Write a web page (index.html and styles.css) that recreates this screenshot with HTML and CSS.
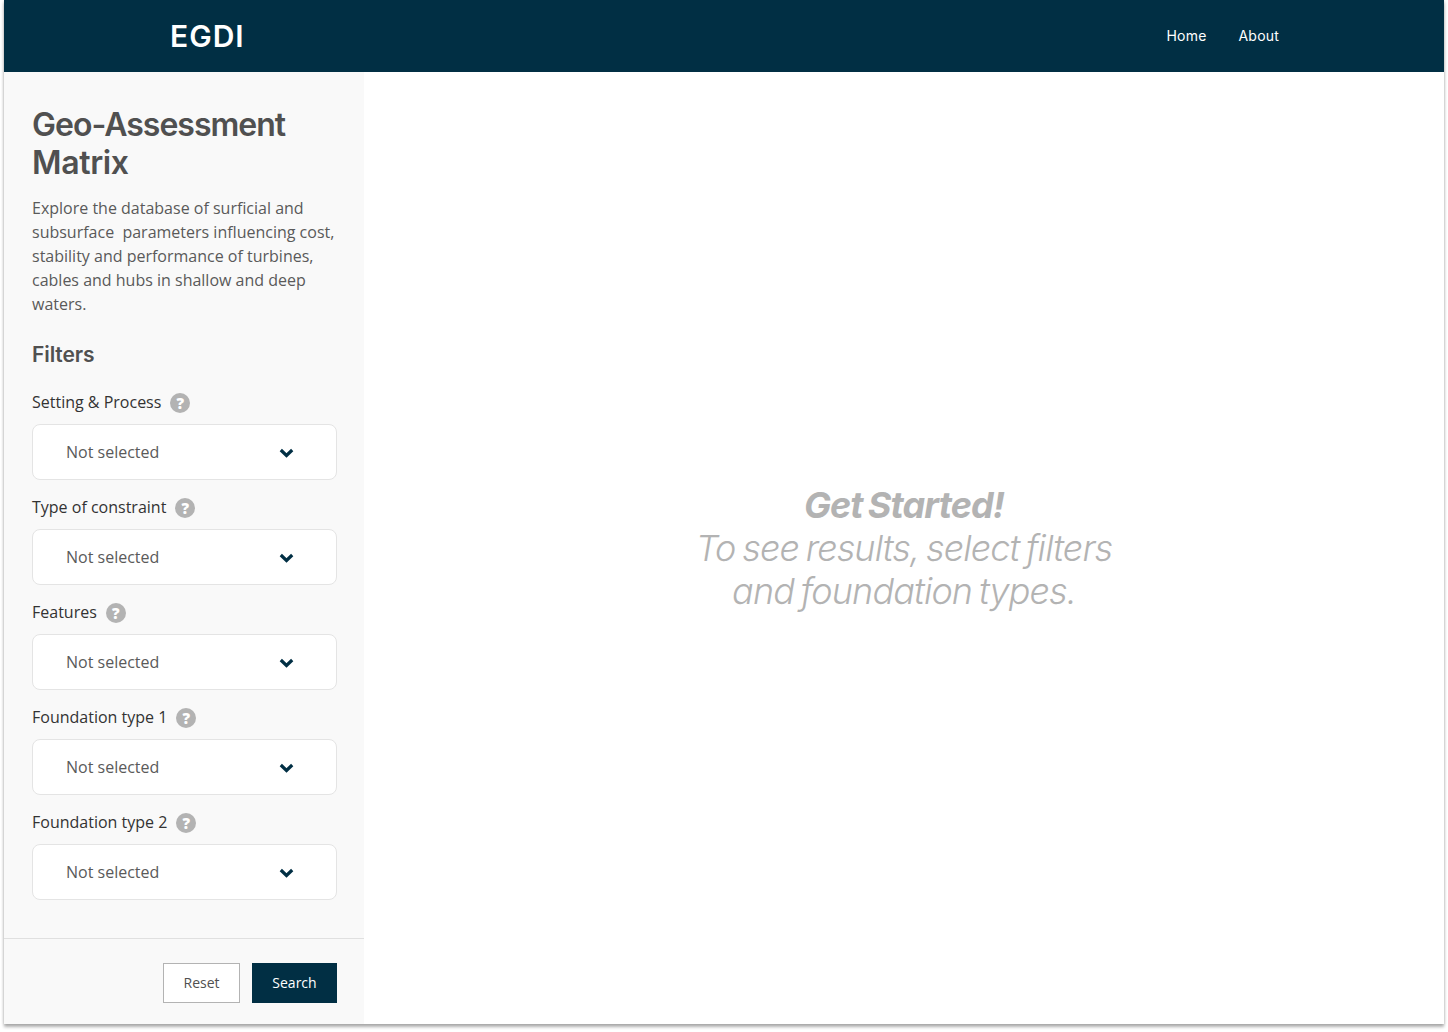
FILE: index.html
```html
<!DOCTYPE html>
<html lang="en">
<head>
<meta charset="utf-8">
<title>EGDI Geo-Assessment Matrix</title>
<link rel="stylesheet" href="styles.css">
</head>
<body>
<div class="app">
  <header class="topbar">
    <div class="brand">EGDI</div>
    <nav class="nav"><a href="#">Home</a><a href="#">About</a></nav>
  </header>
  <div class="content">
    <aside class="sidebar">
      <div class="sidebar-body">
        <h1><span class="tight">Geo-Assessment</span> Matrix</h1>
        <p class="intro">Explore the database of surficial and subsurface&nbsp; parameters influencing cost, stability and performance of turbines, cables and hubs in shallow and deep waters.</p>
        <h2>Filters</h2>
        <div class="field">
          <div class="label">Setting &amp; Process <span class="help">?</span></div>
          <div class="select"><span>Not selected</span><svg class="chev" viewBox="0 0 15 10"><path d="M1.8 2 7.5 7.5 13.2 2"/></svg></div>
        </div>
        <div class="field">
          <div class="label">Type of constraint <span class="help">?</span></div>
          <div class="select"><span>Not selected</span><svg class="chev" viewBox="0 0 15 10"><path d="M1.8 2 7.5 7.5 13.2 2"/></svg></div>
        </div>
        <div class="field">
          <div class="label">Features <span class="help">?</span></div>
          <div class="select"><span>Not selected</span><svg class="chev" viewBox="0 0 15 10"><path d="M1.8 2 7.5 7.5 13.2 2"/></svg></div>
        </div>
        <div class="field">
          <div class="label">Foundation type 1 <span class="help">?</span></div>
          <div class="select"><span>Not selected</span><svg class="chev" viewBox="0 0 15 10"><path d="M1.8 2 7.5 7.5 13.2 2"/></svg></div>
        </div>
        <div class="field">
          <div class="label">Foundation type 2 <span class="help">?</span></div>
          <div class="select"><span>Not selected</span><svg class="chev" viewBox="0 0 15 10"><path d="M1.8 2 7.5 7.5 13.2 2"/></svg></div>
        </div>
      </div>
      <div class="actions">
        <button class="btn btn-reset">Reset</button>
        <button class="btn btn-search">Search</button>
      </div>
    </aside>
    <main class="main">
      <div class="empty"><strong>Get Started!</strong><br>To see results, select filters<br>and foundation types.</div>
    </main>
  </div>
</div>
</body>
</html>
```
FILE: styles.css
```css
* { box-sizing: border-box; }
html, body { margin: 0; height: 100%; overflow: hidden; background: #fff; }
body { padding: 0 4px 8px; }
.app {
  height: 1024px;
  display: flex;
  flex-direction: column;
  background: #fff;
  box-shadow: 0 3px 3px rgba(0,0,0,.3), 0 0 3px rgba(0,0,0,.15);
}
.topbar {
  height: 72px;
  flex: none;
  background: #012f44;
  color: #fff;
  display: flex;
  align-items: center;
  justify-content: space-between;
  padding: 0 165px 0 166px;
  font-family: Inter, sans-serif;
}
.brand { font-size: 30px; font-weight: 600; letter-spacing: 1px; }
.nav { display: flex; gap: 32px; padding-bottom: 1px; }
.nav a { color: #fff; text-decoration: none; font-size: 14px; font-weight: 400; letter-spacing: .2px; }
.content { flex: 1; display: flex; min-height: 0; }
.sidebar {
  width: 360px;
  flex: none;
  background: #f9f9f9;
  display: flex;
  flex-direction: column;
}
.sidebar-body { flex: 1; padding: 34px 27px 0 28px; }
h1 {
  margin: 0;
  font: 600 32px/38px Inter, sans-serif;
  letter-spacing: -.35px;
  color: #505050;
}
.tight { letter-spacing: -1px; }
.intro {
  margin: 14px 0 0;
  font: 400 16px/24px "Open Sans", sans-serif;
  color: #5a5a5a;
}
h2 {
  margin: 25px 0 0;
  font: 600 21px/28px Inter, sans-serif;
  letter-spacing: -.1px;
  color: #505050;
}
.field { margin-bottom: 15px; }
h2 + .field { margin-top: 21px; }
.label {
  display: flex;
  align-items: center;
  gap: 9px;
  height: 24px;
  font: 400 16px/24px "Open Sans", sans-serif;
  color: #333;
  margin-bottom: 10px;
}
.help {
  width: 20px;
  height: 20px;
  margin-top: 2px;
  border-radius: 50%;
  background: #b3b3b3;
  color: #fff;
  display: flex;
  align-items: center;
  justify-content: center;
  font: 800 15px/20px "Open Sans", sans-serif;
}
.select {
  height: 56px;
  background: #fff;
  border: 1px solid #e4e4e4;
  border-radius: 8px;
  display: flex;
  align-items: center;
  justify-content: space-between;
  padding: 0 42px 0 33px;
  font: 400 16px/24px "Open Sans", sans-serif;
  color: #5a5a5a;
}
.chev { width: 15px; height: 10px; fill: none; stroke: #012f44; stroke-width: 3.2; margin-top: 1px; }
.actions {
  height: 86px;
  flex: none;
  border-top: 1px solid #e0e0e0;
  padding: 24px 27px 0 0;
  display: flex;
  justify-content: flex-end;
  gap: 12px;
}
.btn {
  height: 40px;
  font: 400 14px/20px "Open Sans", sans-serif;
  padding: 0;
  border-radius: 0;
}
.btn-reset { width: 77px; background: #fff; border: 1px solid #b3b3b3; color: #505050; }
.btn-search { width: 85px; background: #012f44; border: 0; color: #fff; }
.main { flex: 1; display: flex; align-items: center; justify-content: center; }
.empty {
  text-align: center;
  font: italic 300 36px/43px Inter, sans-serif;
  letter-spacing: -.9px;
  word-spacing: -2.5px;
  color: #b3b3b3;
}
.empty strong { font-weight: 700; }
```
